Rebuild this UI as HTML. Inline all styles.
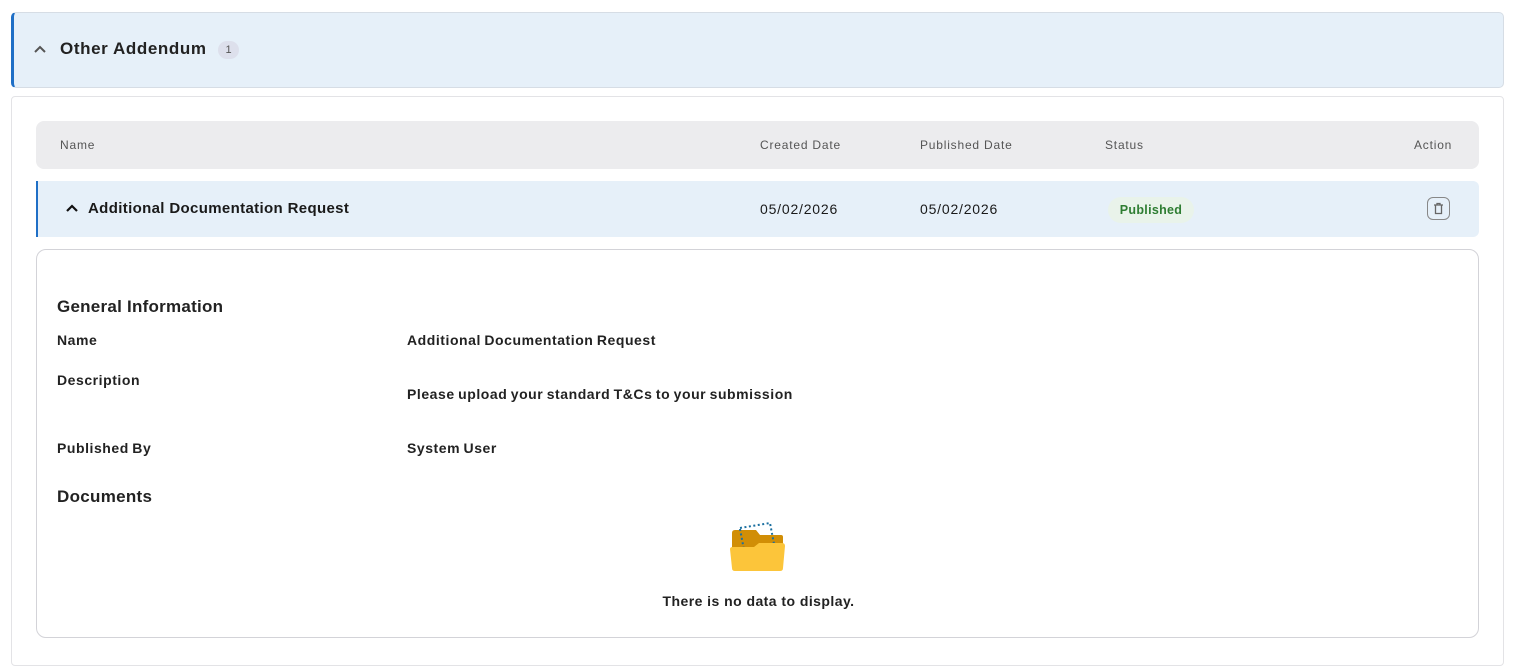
<!DOCTYPE html>
<html><head><meta charset="utf-8"><style>
*{box-sizing:border-box;margin:0;padding:0}
body{width:1517px;height:651px;background:#fff;font-family:"Liberation Sans",sans-serif;color:#1a1a1a;position:relative;overflow:hidden}
.abs{position:absolute;white-space:nowrap}
.h{font-size:12px;color:#555;letter-spacing:0.8px;top:138px}
.b{font-size:14px;font-weight:bold;color:#222;letter-spacing:0.55px;word-spacing:-1px}
</style></head><body>
<div class="abs" style="left:11px;top:12px;width:1493px;height:76px;background:#e6f0f9;border:1px solid #d6dde5;border-radius:5px;border-left:3px solid #1f6fc6"></div>
<svg class="abs" style="left:33px;top:44px" width="14" height="10"><path d="M2 8 L7 3 L12 8" fill="none" stroke="#555" stroke-width="2"/></svg>
<div class="abs" style="left:60px;top:39px;font-size:17px;font-weight:bold;color:#222;letter-spacing:0.6px">Other Addendum</div>
<div class="abs" style="left:218px;top:41px;width:21px;height:18px;border-radius:9px;background:#dde0ec;font-size:11px;color:#555;text-align:center;line-height:18px">1</div>

<div class="abs" style="left:11px;top:96px;width:1493px;height:570px;border:1px solid #e3e3e6;border-radius:4px"></div>
<div class="abs" style="left:36px;top:121px;width:1443px;height:48px;background:#ececee;border-radius:8px"></div>
<div class="abs h" style="left:60px">Name</div>
<div class="abs h" style="left:760px">Created Date</div>
<div class="abs h" style="left:920px">Published Date</div>
<div class="abs h" style="left:1105px">Status</div>
<div class="abs h" style="left:1414px">Action</div>

<div class="abs" style="left:36px;top:181px;width:1443px;height:56px;background:#e6f0f9;border-radius:0 6px 6px 0;border-left:2px solid #1f6fc6"></div>
<svg class="abs" style="left:65px;top:203px" width="14" height="10"><path d="M2 8 L7 3 L12 8" fill="none" stroke="#111" stroke-width="2.2"/></svg>
<div class="abs" style="left:88px;top:200px;font-size:15px;font-weight:bold;letter-spacing:0.35px">Additional Documentation Request</div>
<div class="abs" style="left:760px;top:201px;font-size:14px;letter-spacing:0.8px">05/02/2026</div>
<div class="abs" style="left:920px;top:201px;font-size:14px;letter-spacing:0.8px">05/02/2026</div>
<div class="abs" style="left:1108px;top:197px;width:86px;height:26px;border-radius:13px;background:#e9f3ea;color:#2e7d32;font-size:12.5px;font-weight:bold;text-align:center;line-height:26px;letter-spacing:0.3px">Published</div>
<div class="abs" style="left:1427px;top:197px;width:23px;height:23px;border:1px solid #888;border-radius:6px"></div>
<svg class="abs" style="left:1432px;top:202px" width="13" height="13"><path d="M2 3H11M5 3V1.5H8V3M3.5 3.5V11.5H9.5V3.5" fill="none" stroke="#666" stroke-width="1.3"/></svg>

<div class="abs" style="left:36px;top:249px;width:1443px;height:389px;border:1px solid #d3d3d8;border-radius:10px"></div>
<div class="abs" style="left:57px;top:297px;font-size:17px;font-weight:bold;color:#222;letter-spacing:0.25px">General Information</div>
<div class="abs b" style="left:57px;top:332px">Name</div>
<div class="abs b" style="left:407px;top:332px">Additional Documentation Request</div>
<div class="abs b" style="left:57px;top:372px">Description</div>
<div class="abs b" style="left:407px;top:386px">Please upload your standard T&amp;Cs to your submission</div>
<div class="abs b" style="left:57px;top:440px">Published By</div>
<div class="abs b" style="left:407px;top:440px">System User</div>
<div class="abs" style="left:57px;top:487px;font-size:17px;font-weight:bold;color:#222;letter-spacing:0.3px">Documents</div>
<svg class="abs" style="left:728px;top:518px" width="60" height="56">
<path d="M4 15 Q4 12 7 12 H28 L32 17 H53 Q55 17 55 19 V34 H4Z" fill="#d18e06"/>
<path d="M12 10 L42 5 L46 26" fill="none" stroke="#1a6fa0" stroke-width="2" stroke-dasharray="2 2.5"/>
<path d="M12 11 L16 32" fill="none" stroke="#1a6fa0" stroke-width="2" stroke-dasharray="2 2.5"/>
<path d="M2 31 Q2 29 5 29 H26 L31 25 H54 Q57 25 57 28 L55 50 Q55 53 52 53 H7 Q4 53 4 50Z" fill="#fcc53a"/>
</svg>
<div class="abs" style="left:0;width:1517px;text-align:center;top:593px;font-size:14px;font-weight:bold;color:#222;letter-spacing:0.45px">There is no data to display.</div>
</body></html>
